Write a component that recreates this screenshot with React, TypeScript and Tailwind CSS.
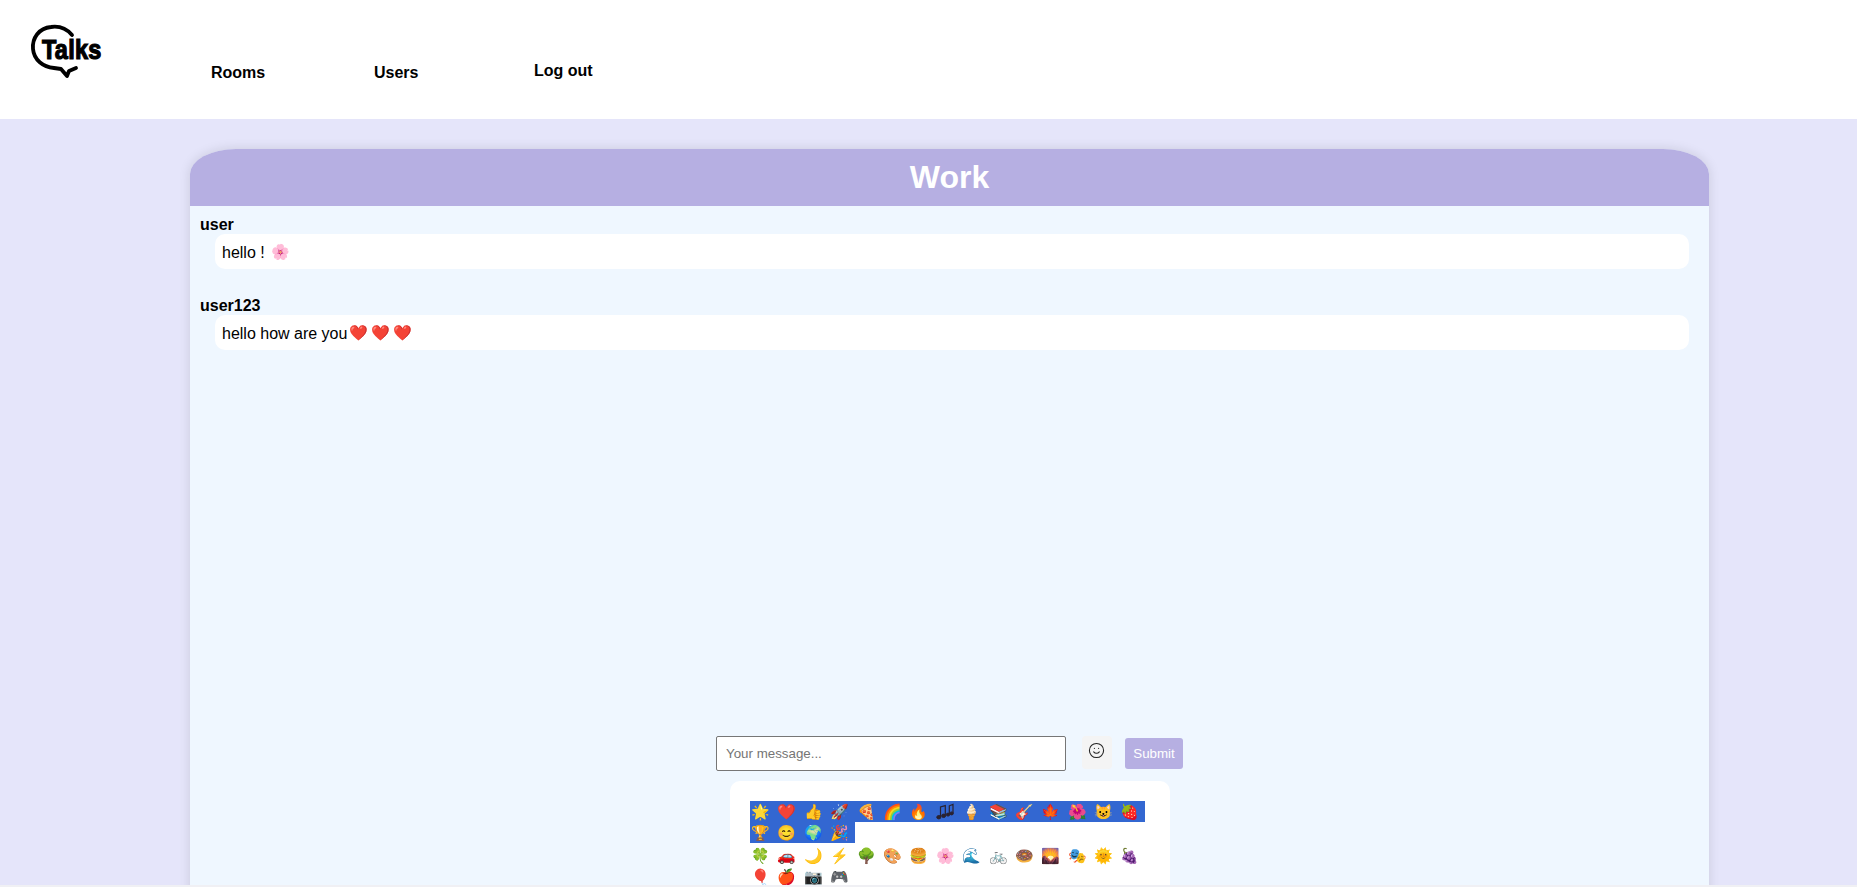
import { Smile } from 'lucide-react'

const FONT = "font-['Liberation_Sans',Arial,sans-serif]"

const SELECTED = ['🌟', '❤️', '👍', '🚀', '🍕', '🌈', '🔥', '🎶', '🍦', '📚', '🎸', '🍁', '🌺', '😺', '🍓', '🏆', '😊', '🌍', '🎉']
const REST = ['🍀', '🚗', '🌙', '⚡', '🌳', '🎨', '🍔', '🌸', '🌊', '🚲', '🍩', '🌄', '🎭', '🌞', '🍇', '🎈', '🍎', '📷', '🎮']

// the font's notes are dark blue and vanish on the selection colour
function Notes() {
  return (
    <svg viewBox="0 0 18 17" className="mx-auto h-[17px] w-[18px]" fill="#2a2230" stroke="#2a2230" strokeWidth="1">
      <ellipse cx="2.8" cy="14.2" rx="2" ry="1.7" />
      <ellipse cx="7.6" cy="12.8" rx="2" ry="1.7" />
      <path d="M4.5 14 V4 L9.3 2.6 V12.6" fill="none" strokeWidth="1.2" />
      <ellipse cx="12" cy="11.6" rx="1.7" ry="1.5" />
      <ellipse cx="15.6" cy="10.4" rx="1.7" ry="1.5" />
      <path d="M13.3 11.4 V2.8 L17 1.4 V10.2" fill="none" strokeWidth="1.2" />
    </svg>
  )
}

function Emoji({ char, selected }: { char: string; selected?: boolean }) {
  return (
    <span className={`flex h-[21px] w-[26.4px] items-center pr-[4.4px] ${selected ? 'bg-[#3367d1]' : ''}`}>
      <span className="w-[22px] text-center text-[15px] leading-[21px]">
        {char === '🎶' ? <Notes /> : char}
      </span>
    </span>
  )
}

function MessageEmoji({ char }: { char: string }) {
  return <span className="w-[22px] text-center text-[15px]">{char}</span>
}

function Logo() {
  return (
    <div className="absolute left-[20px] top-[15px] h-[70px] w-[90px]">
      <svg viewBox="0 0 90 70" className="absolute inset-0 h-[70px] w-[90px]" fill="none" stroke="black" strokeWidth="3.8" strokeLinecap="round" strokeLinejoin="round">
        <path d="M52 20 C46 13 38 11 31 12 C19 13 12 23 13 34 C14 45 23 52 34 53 L41 54 L47 61 L49 56 L56 53" />
      </svg>
      <span className="absolute left-[22px] top-[22px] origin-left scale-x-[0.87] text-[27px] leading-[26px] font-bold tracking-[0.3px] [-webkit-text-stroke:1.2px_black]">Talks</span>
    </div>
  )
}

export default function App() {
  return (
    <div className={`relative h-[887px] overflow-hidden bg-[#e5e5fa] text-black ${FONT}`}>
      <header className="relative h-[119px] bg-white">
        <Logo />
        <nav className="text-[16px] font-bold">
          <a className="absolute left-[211px] top-[61px]">Rooms</a>
          <a className="absolute left-[374px] top-[61px]">Users</a>
          <a className="absolute left-[534px] top-[59px]">Log out</a>
        </nav>
      </header>
      <main className="ml-[190px] mt-[30px] flex w-[1519px] flex-col overflow-hidden rounded-t-[46px_25px] bg-[#eff7ff] shadow-[0_0_12px_rgba(0,0,0,0.12)]">
        <h1 className="flex h-[57px] items-center justify-center bg-[#b6afe2] pb-[2px] text-[32px] font-bold text-white">Work</h1>
        <div className="h-[530px] px-[10px] pt-[10px] text-[16px]">
          <div className="font-bold leading-[18px]">user</div>
          <p className="ml-[15px] mr-[10px] flex h-[35px] items-center rounded-[10px] bg-white px-[7px] pt-[2px]">
            hello !&nbsp;<MessageEmoji char="🌸" />
          </p>
          <div className="mt-[28px] font-bold leading-[18px]">user123</div>
          <p className="ml-[15px] mr-[10px] flex h-[35px] items-center rounded-[10px] bg-white px-[7px] pt-[2px]">
            hello how are you
            <MessageEmoji char="❤️" />
            <MessageEmoji char="❤️" />
            <MessageEmoji char="❤️" />
          </p>
        </div>
        <form className="flex items-start justify-center">
          <input placeholder="Your message..." className="h-[35px] w-[350px] rounded-[2px] border border-[#767676] bg-white px-[9px] text-[13.33px] outline-none placeholder:text-[#757575]" />
          <span className="ml-[16px] flex h-[33px] w-[30px] items-center justify-center rounded-[4px] bg-[#f4f4f4] pb-[4px] pr-[1px]">
            <Smile size={17} strokeWidth={1.5} color="#222" />
          </span>
          <button type="button" className="ml-[13px] mt-[2px] h-[31px] w-[58px] rounded-[3px] bg-[#b6afe2] text-[13.33px] text-white">Submit</button>
        </form>
        <div className="mx-auto mt-[10px] h-[200px] w-[440px] rounded-[10px] bg-white pl-[20px] pt-[20px]">
          <div className="flex w-[400px] flex-wrap">
            {SELECTED.map((e) => <Emoji key={e} char={e} selected />)}
            <div className="h-[2px] w-full" />
            {REST.map((e) => <Emoji key={e} char={e} />)}
          </div>
        </div>
      </main>
      <div className="absolute inset-x-0 bottom-0 h-[2px] bg-[#f0f0f4]" />
    </div>
  )
}
